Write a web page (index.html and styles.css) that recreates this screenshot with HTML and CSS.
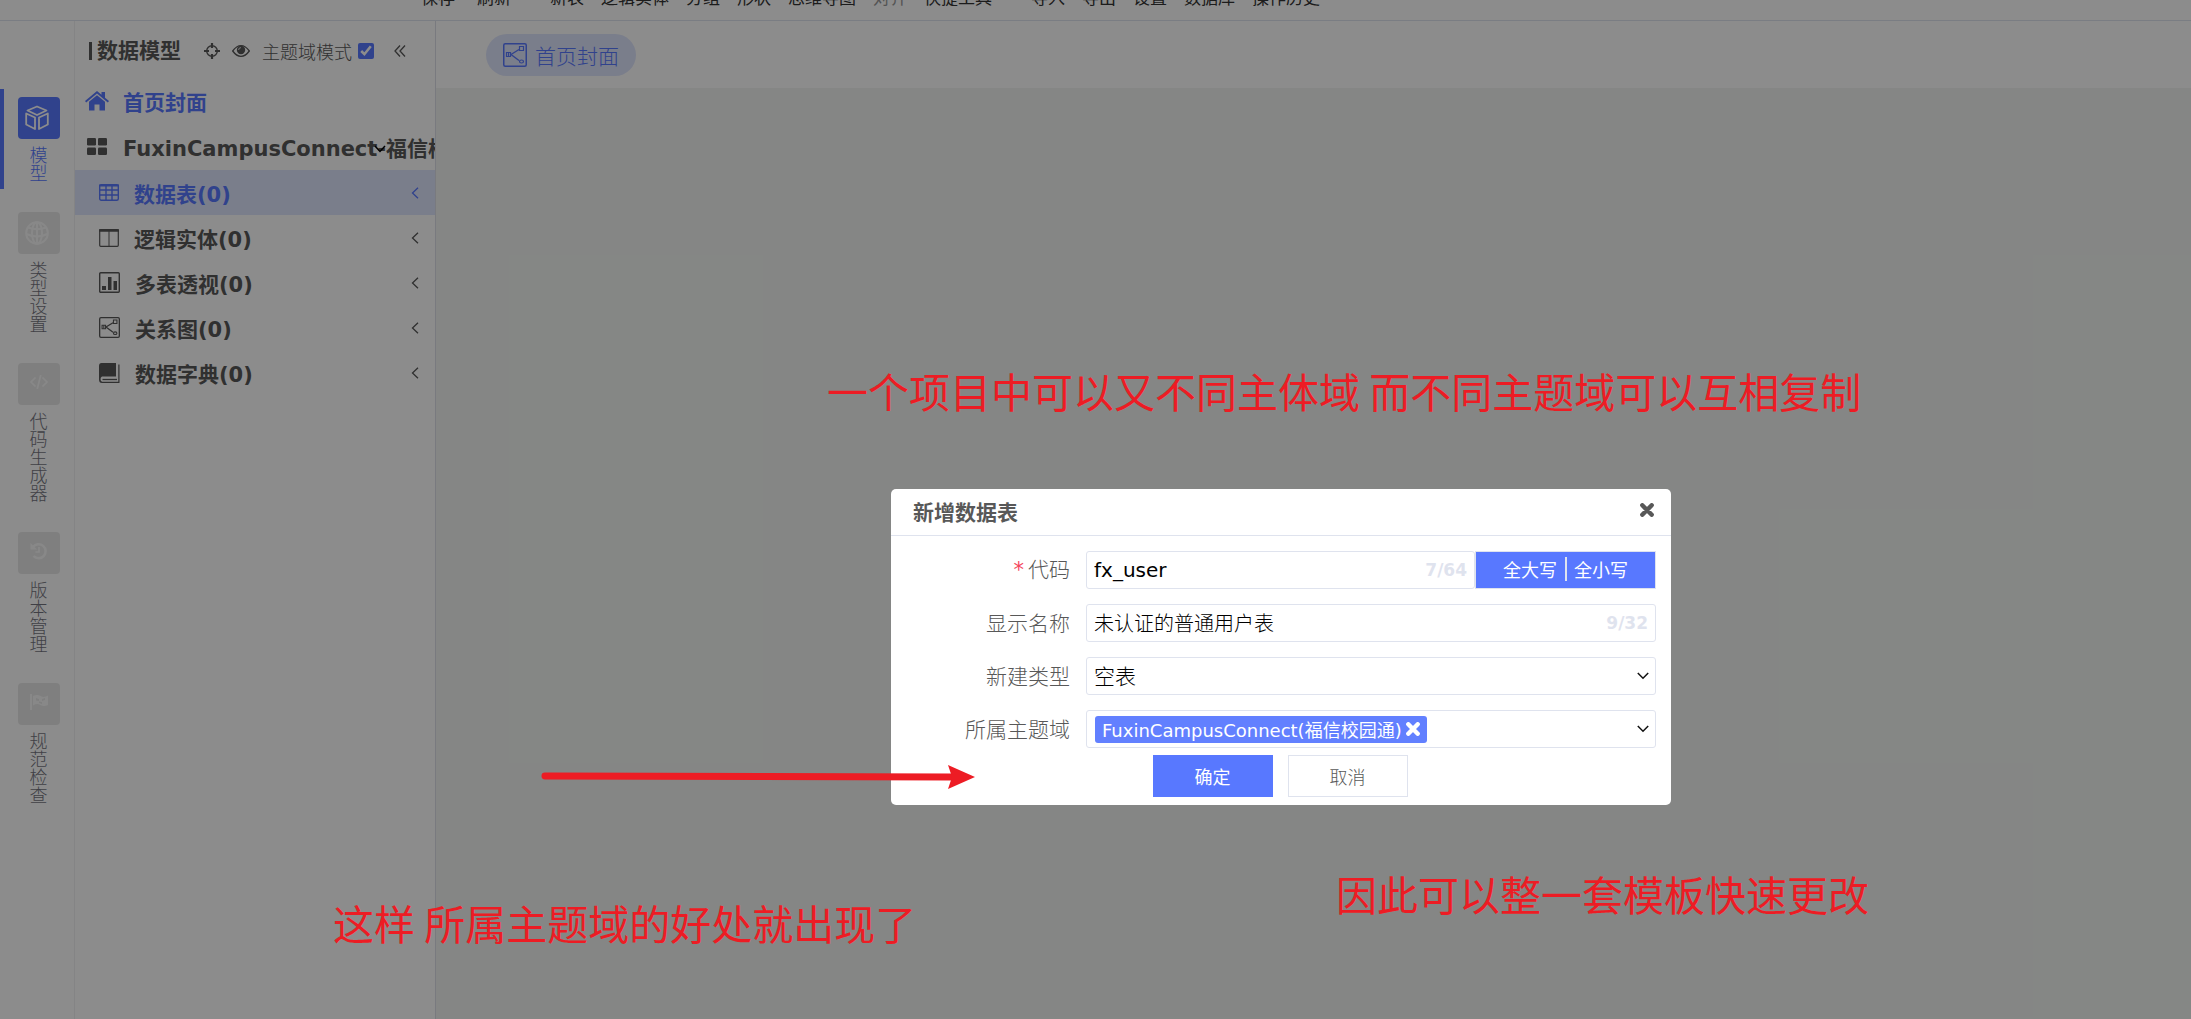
FILE: index.html
```html
<!DOCTYPE html>
<html lang="zh-CN">
<head>
<meta charset="utf-8">
<title>数据模型</title>
<link rel="stylesheet" href="styles.css">
</head>
<body>
<svg class="defs" width="0" height="0" aria-hidden="true">
  <symbol id="relation" viewBox="0 0 24 24"><g fill="none" stroke="currentColor"><rect x="0.75" y="0.75" width="22.5" height="22.5" rx="1.5" stroke-width="1.5"/><path d="M8 11.5L16 6.5M8 11.5L16 17.5" stroke-width="1.4"/><path d="M16.5 3.5h4v4h-4zM3.500 9.500h4v4h-4z" stroke-width="1.2"/><path d="M16.500 18.500c0-2 4-2 4 0s-4 2-4 0M5.500 9.500v4" stroke-width="1.200"/></g></symbol>
  <symbol id="left" viewBox="0 0 8 12"><path d="M7 0.800L1.500 6L7 11.200" fill="none" stroke="currentColor" stroke-width="1.300"/></symbol>
  <symbol id="close" viewBox="0 0 14 14"><path d="M2.300 2.300L11.700 11.700M11.700 2.300L2.300 11.700" stroke="currentColor" stroke-width="4.400" stroke-linecap="round"/></symbol>
</svg>
<div class="app">
  <nav class="toolbar">
    <div class="group"><button>保存</button><button class="wide">刷新</button></div>
    <div class="group"><button>新表</button><button>逻辑实体</button><button>分组</button><button>形状</button><button>思维导图</button><button disabled>对齐</button><button>快捷工具</button></div>
    <div class="group"><button>导入</button><button>导出</button><button>设置</button><button>数据库</button><button>操作历史</button></div>
  </nav>
  <div class="body">
    <nav class="rail">
      <a href="#" class="rail-item active"><span class="tile"><svg width="24" height="26" viewBox="0 0 24 26" fill="none" stroke="currentColor" stroke-width="1.8" stroke-linejoin="round"><path d="M12 1.500L21.500 5.500L12 10L2.500 5.500ZM1.200 8.500L10 12.500V24L1.200 19.500ZM22.800 8.500L14 12.500V24L22.800 19.500Z"/></svg></span><span class="rail-text">模型</span></a>
      <a href="#" class="rail-item"><span class="tile"><svg width="24" height="24" viewBox="0 0 24 24" fill="none" stroke="currentColor" stroke-width="2"><circle cx="12" cy="12" r="10.800"/><ellipse cx="12" cy="12" rx="5" ry="10.800"/><path d="M3 6.500Q12 10 21 6.500M1.500 13Q12 18 22.500 13M12 1v22"/></svg></span><span class="rail-text">类型设置</span></a>
      <a href="#" class="rail-item"><span class="tile mid"><svg width="18" height="14" viewBox="0 0 18 14" fill="none" stroke="currentColor" stroke-width="1.700"><path d="M5.500 2.500L1 7L5.500 11.500M12.500 2.500L17 7L12.500 11.500M10.800 0L7.200 14"/></svg></span><span class="rail-text">代码生成器</span></a>
      <a href="#" class="rail-item"><span class="tile mid"><svg width="18" height="18" viewBox="0 0 18 18" fill="none" stroke="currentColor" stroke-width="2.500"><path d="M3 5A7 7 0 1 1 3.500 14"/><path d="M9 5v5H5.500" stroke-width="1.700"/><path d="M0.500 1v6.500H7z" fill="currentColor" stroke="none"/></svg></span><span class="rail-text">版本管理</span></a>
      <a href="#" class="rail-item"><span class="tile mid"><svg width="18" height="16" viewBox="0 0 18 16"><path d="M0 0h2v16H0z" fill="currentColor"/><path d="M3 2q4-2 7.500 0T18 1.500v9.500q-4 2-7.500 0T3 11.500z" fill="currentColor"/><path d="M6 4l3 1v2L6 6.500zM12 5l3-1v2l-3 1zM9 7.500l3 .5v2l-3-1z" class="flag-gap"/></svg></span><span class="rail-text">规范检查</span></a>
    </nav>
    <aside class="sidebar">
      <header class="side-head">
        <h1>数据模型</h1>
        <svg class="i-target" width="16" height="16" viewBox="0 0 16 16" fill="none" stroke="currentColor"><circle cx="8" cy="8" r="5.300" stroke-width="1.400" /><path d="M8 0v5M8 11v5M0 8h5M11 8h5" stroke-width="2.200"/></svg>
        <svg class="i-eye" width="18" height="12" viewBox="0 0 18 12"><path d="M0.700 6Q4.500 .7 9 .7T17.300 6Q13.500 11.300 9 11.300T.7 6z" fill="none" stroke="currentColor" stroke-width="1.300"/><circle cx="9" cy="5" r="4.200" fill="currentColor"/><path d="M6.600 5A2.400 2.400 0 0 1 9 2.600" fill="none" stroke="#fff" stroke-width=".8"/></svg>
        <label class="mode">主题域模式<input type="checkbox" checked></label>
        <svg width="12" height="12" viewBox="0 0 12 12" fill="none" stroke="currentColor" stroke-width="1.300"><path d="M6 .5L1 6l5 5.500M11 .5L6 6l5 5.500"/></svg>
      </header>
      <a href="#" class="row top home"><svg width="24" height="20" viewBox="0 0 24 20" fill="currentColor"><path d="M12 0l4.500 3.800V1h3.500v5.700L24 10l-1.200 1.400L12 2.600 1.200 11.400 0 10z"/><path d="M12 4.300l8 6.500V19.500h-5.500v-6h-5v6H4v-8.700z"/></svg><span>首页封面</span></a>
      <a href="#" class="row top project"><svg width="20" height="17" viewBox="0 0 20 17" fill="currentColor"><rect width="9" height="7.500" rx="1.200"/><rect x="11" width="9" height="7.500" rx="1.200"/><rect y="9.500" width="9" height="7.500" rx="1.200"/><rect x="11" y="9.500" width="9" height="7.500" rx="1.200"/></svg><span>FuxinCampusConnect-福信校园通</span><svg class="caret" width="12" height="8" viewBox="0 0 12 8" fill="none" stroke="#000" stroke-width="1.500"><path d="M1 1l5 5.500L11 1"/></svg></a>
      <a href="#" class="row selected"><svg width="20" height="17" viewBox="0 0 20 17" fill="none" stroke="currentColor" stroke-width="1.400"><rect x=".7" y=".7" width="18.600" height="15.600" rx="1.500"/><path d="M0 1.500h20" stroke-width="2"/><path d="M1 6h18M1 11h18M7 2v14M13 2v14"/></svg><span>数据表(0)</span><svg class="chev" width="8" height="12"><use href="#left"/></svg></a>
      <a href="#" class="row"><svg width="20" height="18" viewBox="0 0 20 18" fill="none" stroke="currentColor"><rect x=".7" y=".7" width="18.600" height="16.600" rx="1" stroke-width="1.200"/><path d="M0 1.500h20" stroke-width="2.500"/><path d="M10 2v15"/></svg><span>逻辑实体(0)</span><svg class="chev" width="8" height="12"><use href="#left"/></svg></a>
      <a href="#" class="row"><svg width="21" height="21" viewBox="0 0 21 21"><rect x=".7" y=".7" width="19.600" height="19.600" rx="1" fill="none" stroke="currentColor" stroke-width="1.400"/><path d="M3 14h4v4H3zM9 5h3.500v13H9zM14.500 9H18v9h-3.500z" fill="currentColor"/></svg><span>多表透视(0)</span><svg class="chev" width="8" height="12"><use href="#left"/></svg></a>
      <a href="#" class="row"><svg width="21" height="21"><use href="#relation"/></svg><span>关系图(0)</span><svg class="chev" width="8" height="12"><use href="#left"/></svg></a>
      <a href="#" class="row"><svg width="21" height="20" viewBox="0 0 21 20"><path d="M2.500 0H17v13.500H3Q1.500 14 1.500 16T3 18.700H19.300V1.500H20.500V20H3Q0 20 0 16.500V3Q0 0 2.500 0z" fill="currentColor"/><path d="M3.500 16.500H18" stroke="currentColor" stroke-width="1.300"/></svg><span>数据字典(0)</span><svg class="chev" width="8" height="12"><use href="#left"/></svg></a>
    </aside>
    <main class="main">
      <div class="tabs"><button class="tab"><svg width="24" height="24"><use href="#relation"/></svg>首页封面</button></div>
      <div class="canvas"></div>
    </main>
  </div>
</div>
<div class="mask"></div>
<section class="dialog" role="dialog" aria-labelledby="dialog-title">
  <header class="dialog-head"><h2 id="dialog-title">新增数据表</h2><button class="x" aria-label="关闭"><svg width="14" height="14"><use href="#close"/></svg></button></header>
  <form class="form">
    <label for="code"><span class="star">*</span>代码</label>
    <div class="code-row"><div class="field"><input id="code" class="latin" value="fx_user"><span class="count">7/64</span></div><div class="case"><button type="button">全大写</button><button type="button">全小写</button></div></div>
    <label for="name">显示名称</label>
    <div class="field"><input id="name" value="未认证的普通用户表"><span class="count">9/32</span></div>
    <label for="type">新建类型</label>
    <div class="field"><select id="type"><option>空表</option></select><svg class="down" width="12" height="8" viewBox="0 0 12 8"><path d="M.8 1L6 6.300 11.200 1" fill="none" stroke="#111" stroke-width="1.500"/></svg></div>
    <label for="domain">所属主题域</label>
    <div class="field"><button type="button" id="domain" class="chip">FuxinCampusConnect(福信校园通)<svg width="14" height="14"><use href="#close"/></svg></button><svg class="down" width="12" height="8" viewBox="0 0 12 8"><path d="M.8 1L6 6.300 11.200 1" fill="none" stroke="#111" stroke-width="1.500"/></svg></div>
  </form>
  <footer class="actions"><button class="ok">确定</button><button class="cancel">取消</button></footer>
</section>
<p class="note note-a">一个项目中可以又不同主体域 而不同主题域可以互相复制</p>
<p class="note note-b">因此可以整一套模板快速更改</p>
<p class="note note-c">这样 所属主题域的好处就出现了</p>
<svg class="arrow" width="435" height="26" viewBox="0 0 435 26"><path d="M4 11L410 12" stroke="#ed1c24" stroke-width="7" stroke-linecap="round"/><path d="M407 0L434 12L407 24L411 12z" fill="#ed1c24"/></svg>
</body>
</html>
```
FILE: styles.css
```css
* { box-sizing: border-box; }
body, h1, h2, p { margin: 0; }
body {
  height: 100vh;
  overflow: hidden;
  position: relative;
  font-family: "DejaVu Sans", "Noto Sans CJK SC", sans-serif;
  font-size: 18px;
  color: #585858;
}
button, input, select { font: inherit; color: inherit; border: 0; padding: 0; margin: 0; background: none; }
a { color: inherit; text-decoration: none; }
svg { flex: none; }
.defs { position: absolute; }

.app { height: 100%; display: flex; flex-direction: column; background: #fff; }
.toolbar {
  height: 21px;
  flex: none;
  display: flex;
  align-items: flex-end;
  gap: 39px;
  padding: 0 0 13px 421px;
  border-bottom: 1px solid #dfe3ee;
  overflow: hidden;
  font-size: 17px;
  line-height: 20px;
}
.group { display: flex; gap: 17px; font-family: "Noto Sans CJK SC", sans-serif; }
.group button { color: #333; }
.group button:disabled { color: #999; }
.group .wide { padding-left: 5px; }
.body { flex: 1; display: flex; min-height: 0; }

.rail { width: 75px; flex: none; border-right: 1px solid #f0f0f3; padding-top: 68px; display: flex; flex-direction: column; gap: 15px; }
.rail-item { display: flex; flex-direction: column; align-items: center; gap: 6px; padding: 8px 1px 8px 0; border-left: 4px solid transparent; color: #74747e; }
.rail-item.active { border-color: #5878ff; color: #5878ff; }
.tile { width: 42px; height: 42px; border-radius: 4px; background: #e8e8e8; color: #f8f8f8; display: flex; align-items: center; justify-content: center; padding-right: 4px; }
.tile.mid { padding: 0 0 4px; }
.active .tile { background: #5878ff; color: #fff; }
.flag-gap { fill: #e8e8e8; }
.rail-text { width: 18px; font: 300 18px/18px "Noto Sans CJK SC", sans-serif; }

.sidebar { width: 360px; flex: none; overflow: hidden; }
.side-head { height: 59px; margin-bottom: -2px; display: flex; align-items: center; padding-left: 14px; }
.side-head h1 { font-size: 21px; line-height: 28px; display: flex; align-items: center; gap: 5px; }
.side-head h1::before { content: ""; width: 3px; height: 18px; background: #585858; }
.i-target { margin-left: 23px; }
.i-eye { margin-left: 12px; }
.mode { margin: 0 20px 0 12px; display: flex; align-items: center; gap: 6px; font: 300 18px/24px "Noto Sans CJK SC", sans-serif; }
.mode input { width: 16px; height: 16px; margin: 0; accent-color: #5878ff; }
.row { height: 45px; display: flex; align-items: center; padding: 0 16px 0 24px; font-weight: 700; font-size: 21px; white-space: nowrap; position: relative; }
.row > svg:first-child { margin-right: 15px; }
.row span { flex: 1; }
.row.top { padding-left: 10px; }
.row.top > svg:first-child { width: 24px; margin-right: 14px; }
.row.project { height: 47px; }
.home, .selected { color: #5878ff; }
.selected { background: #dfe5fd; }
.caret { position: absolute; left: 299px; top: 22px; }

.main { flex: 1; display: flex; flex-direction: column; min-width: 0; border-left: 1px solid #dcdfe8; }
.tabs { height: 67px; padding: 13px 50px; }
.tab { height: 42px; width: 150px; border-radius: 21px; background: #dfe5fd; color: #5878ff; display: flex; align-items: center; justify-content: center; gap: 8px; font: 300 21px/28px "Noto Sans CJK SC", sans-serif; }
.canvas { flex: 1; background: #f2f5f2; }
.mask { position: absolute; inset: 0; background: rgba(0, 0, 0, .45); }

.dialog { position: absolute; left: 891px; top: 489px; width: 780px; background: #fff; border-radius: 5px; padding-bottom: 8px; }
.dialog-head { height: 47px; padding: 0 17px 0 22px; border-bottom: 1px solid #dfe3ee; display: flex; align-items: center; justify-content: space-between; }
.dialog-head h2 { font-size: 21px; line-height: 28px; padding-top: 2px; }
.x { display: flex; padding-bottom: 4px; }
.form { display: grid; grid-template-columns: 179px 1fr; column-gap: 16px; row-gap: 15px; padding: 15px 15px 7px 0; align-items: center; }
.form label { text-align: right; padding-bottom: 2px; font: 300 21px/28px "Noto Sans CJK SC", sans-serif; }
.star { color: #f5455c; margin-right: 4px; font-family: "DejaVu Sans", sans-serif; font-weight: 400; }
.code-row { display: flex; }
.field { flex: 1; height: 38px; border: 1px solid #dfe3ee; border-radius: 3px; display: flex; align-items: center; padding: 0 7px; }
.field input, .field select { flex: 1; min-width: 0; appearance: none; outline: 0; color: #000; font: 300 20px/28px "Noto Sans CJK SC", sans-serif; }
.field .latin { font-family: "DejaVu Sans", sans-serif; font-weight: 400; }
.field select { font-size: 21px; padding-bottom: 3px; }
.count { color: #dfe3ee; font-weight: 700; font-size: 17px; }
.down { margin-right: -1px; }
.case { width: 181px; height: 38px; border: 1px solid #dfe3ee; background: #5878ff; color: #fff; display: flex; align-items: center; justify-content: center; padding-bottom: 2px; font: 400 18px/24px "Noto Sans CJK SC", sans-serif; }
.case button + button { border-left: 2px solid #dfe3ee; margin-left: 8px; padding-left: 7px; }
.chip { height: 27px; border-radius: 3px; background: #6280ff; color: #fff; padding: 0 7px; display: flex; align-items: center; gap: 4px; margin: 0 auto 0 1px; }
.actions { display: flex; justify-content: center; gap: 15px; padding-right: 2px; }
.actions button { width: 120px; height: 42px; font: 300 18px/24px "Noto Sans CJK SC", sans-serif; }
.actions .ok { background: #5878ff; color: #fff; font-weight: 400; }
.actions .cancel { border: 1px solid #dfe3ee; }

.note { position: absolute; font: 400 41px/56px "Noto Sans CJK SC", sans-serif; color: #ed1c24; white-space: nowrap; }
.note-a { left: 827px; top: 362px; }
.note-b { left: 1336px; top: 865px; }
.note-c { left: 333px; top: 894px; }
.arrow { position: absolute; left: 541px; top: 765px; }
```
